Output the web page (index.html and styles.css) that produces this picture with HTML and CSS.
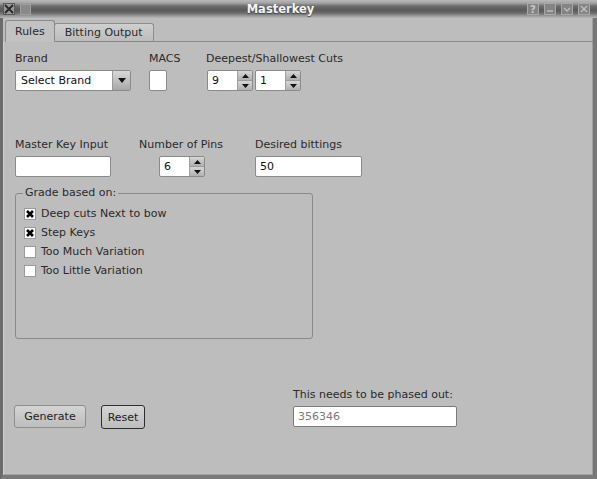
FILE: index.html
```html
<!DOCTYPE html>
<html>
<head>
<meta charset="utf-8">
<link rel="stylesheet" href="styles.css">
</head>
<body>
<div class="window">
  <div class="titlebar">
    <div class="tb-left">
      <svg class="tb-icon" width="12" height="12" viewBox="0 0 12 12"><rect x="0.5" y="0.5" width="11" height="11" fill="#9a9a9a" stroke="#5a5a5a"/><path d="M2 2 L10 10 M10 2 L2 10" stroke="#2a2a2a" stroke-width="2"/></svg>
      <svg class="tb-icon" width="11" height="11" viewBox="0 0 11 11"><rect x="0.5" y="0.5" width="10" height="10" fill="#8a8a8a" stroke="#9e9e9e"/></svg>
    </div>
    <div class="tb-title">Masterkey</div>
    <div class="tb-right">
      <span class="tb-btn">?</span>
      <span class="tb-btn"><svg width="10" height="10" viewBox="0 0 10 10"><path d="M2 7 H8" stroke="#bbb" stroke-width="1.5"/></svg></span>
      <span class="tb-btn"><svg width="10" height="10" viewBox="0 0 10 10"><path d="M2 4 L5 7 L8 4" stroke="#bbb" stroke-width="1.5" fill="none"/></svg></span>
      <span class="tb-btn"><svg width="10" height="10" viewBox="0 0 10 10"><path d="M2 2 L8 8 M8 2 L2 8" stroke="#bbb" stroke-width="1.5"/></svg></span>
    </div>
  </div>
  <div class="client">
    <div class="tabbar">
      <div class="tab active">Rules</div>
      <div class="tab">Bitting Output</div>
      <div class="tab-fill"></div>
    </div>
    <div class="panel">
      <div class="row row1">
        <div class="field f-brand">
          <label>Brand</label>
          <div class="combo">
            <span class="combo-text">Select Brand</span>
            <span class="combo-btn"><svg width="8" height="5" viewBox="0 0 8 5"><path d="M0 0 H8 L4 5 Z" fill="#111"/></svg></span>
          </div>
        </div>
        <div class="field f-macs">
          <label>MACS</label>
          <div class="bigcheck"></div>
        </div>
        <div class="field f-cuts">
          <label>Deepest/Shallowest Cuts</label>
          <div class="spins">
            <div class="spin"><span class="spin-text">9</span><span class="spin-btns"><span class="up"><svg width="7" height="4" viewBox="0 0 7 4"><path d="M0 4 H7 L3.5 0 Z" fill="#111"/></svg></span><span class="down"><svg width="7" height="4" viewBox="0 0 7 4"><path d="M0 0 H7 L3.5 4 Z" fill="#111"/></svg></span></span></div>
            <div class="spin"><span class="spin-text">1</span><span class="spin-btns"><span class="up"><svg width="7" height="4" viewBox="0 0 7 4"><path d="M0 4 H7 L3.5 0 Z" fill="#111"/></svg></span><span class="down"><svg width="7" height="4" viewBox="0 0 7 4"><path d="M0 0 H7 L3.5 4 Z" fill="#111"/></svg></span></span></div>
          </div>
        </div>
      </div>

      <div class="row row2">
        <div class="field f-master">
          <label>Master Key Input</label>
          <div class="textbox w96"></div>
        </div>
        <div class="field f-pins">
          <label>Number of Pins</label>
          <div class="spin pins"><span class="spin-text">6</span><span class="spin-btns"><span class="up"><svg width="7" height="4" viewBox="0 0 7 4"><path d="M0 4 H7 L3.5 0 Z" fill="#111"/></svg></span><span class="down"><svg width="7" height="4" viewBox="0 0 7 4"><path d="M0 0 H7 L3.5 4 Z" fill="#111"/></svg></span></span></div>
        </div>
        <div class="field f-desired">
          <label>Desired bittings</label>
          <div class="textbox w107">50</div>
        </div>
      </div>

      <fieldset class="group">
        <legend>Grade based on:</legend>
        <div class="chk"><span class="box checked"><svg width="10" height="10" viewBox="0 0 10 10"><path d="M2 2 L8 8 M8 2 L2 8" stroke="#000" stroke-width="2.6"/></svg></span>Deep cuts Next to bow</div>
        <div class="chk"><span class="box checked"><svg width="10" height="10" viewBox="0 0 10 10"><path d="M2 2 L8 8 M8 2 L2 8" stroke="#000" stroke-width="2.6"/></svg></span>Step Keys</div>
        <div class="chk"><span class="box"></span>Too Much Variation</div>
        <div class="chk"><span class="box"></span>Too Little Variation</div>
      </fieldset>

      <div class="row bottom">
        <div class="buttons">
          <button class="btn gen">Generate</button>
          <button class="btn reset">Reset</button>
        </div>
        <div class="field f-phase">
          <label>This needs to be phased out:</label>
          <div class="textbox phase">356346</div>
        </div>
      </div>
    </div>
  </div>
</div>
</body>
</html>
```

FILE: styles.css
```css
* { box-sizing: border-box; }
html, body { margin: 0; padding: 0; }
body {
  width: 597px;
  height: 479px;
  overflow: hidden;
  background: #3a3a3a;
  font-family: "DejaVu Sans", "Liberation Sans", sans-serif;
  font-size: 11px;
  color: #2a2a2a;
}
.window {
  width: 597px;
  height: 479px;
  display: flex;
  flex-direction: column;
  background: #bdbdbd;
}
.titlebar {
  height: 18px;
  flex: none;
  display: flex;
  align-items: center;
  background: linear-gradient(to bottom, #b9b9b9 0px, #a4a4a4 3px, #6d6d6d 6px, #5a5a5a 10px, #6a6a6a 13px, #9c9c9c 16px, #b7b7b7 18px);
}
.tb-left {
  display: flex;
  gap: 5px;
  padding-left: 3px;
  align-items: center;
  width: 100px;
}
.tb-icon { display: block; }
.tb-title {
  flex: 1;
  text-align: center;
  color: #f4f4f4;
  font-weight: bold;
  font-size: 11.5px;
  text-shadow: 0 1px 1px #444;
  padding-right: 36px;
}
.tb-right {
  display: flex;
  gap: 5px;
  padding-right: 7px;
  width: 100px;
  justify-content: flex-end;
}
.tb-btn {
  width: 12px;
  height: 12px;
  border: 1px solid #a8a8a8;
  background: #848484;
  color: #c8c8c8;
  font-size: 10px;
  display: flex;
  align-items: center;
  justify-content: center;
  font-weight: bold;
}
.client {
  flex: 1;
  display: flex;
  flex-direction: column;
  border-left: 3px solid #6b6b6b;
  border-right: 4px solid #777;
  border-bottom: 4px solid #7a7a7a;
  box-shadow: inset -1px -1px 0 #a0a0a0;
}
.tabbar {
  display: flex;
  align-items: flex-end;
  height: 24px;
  padding-left: 2px;
}
.tab {
  height: 19px;
  padding: 0 10px;
  line-height: 18px;
  border: 1px solid #8e8e8e;
  border-bottom: 1px solid #888;
  border-radius: 3px 3px 0 0;
  background: linear-gradient(#cfcfcf, #bcbcbc);
  margin-left: -1px;
}
.tab.active {
  height: 22px;
  line-height: 21px;
  padding: 0 9px;
  background: #c2c2c2;
  border-color: #8a8a8a;
  border-bottom-color: #c0c0c0;
  position: relative;
  z-index: 1;
  margin-left: 0;
}
.tab-fill {
  flex: 1;
  border-bottom: 1px solid #8a8a8a;
}
.panel {
  flex: 1;
  padding: 10px 0 0 11px;
  border-left: 1px solid #d0d0d0;
}
.row {
  display: flex;
  align-items: flex-start;
}
.field {
  display: flex;
  flex-direction: column;
}
.field label {
  height: 13px;
  line-height: 13px;
  margin-bottom: 5px;
}
.f-brand { width: 116px; }
.f-macs { margin-left: 18px; width: 57px; }
.combo {
  height: 21px;
  width: 116px;
  display: flex;
  border: 1px solid #8a8a8a;
  border-radius: 2px;
  background: #fff;
}
.combo-text {
  flex: 1;
  padding-left: 5px;
  line-height: 19px;
  color: #111;
}
.combo-btn {
  width: 18px;
  border-left: 1px solid #9a9a9a;
  background: linear-gradient(#d8d8d8, #a8a8a8);
  display: flex;
  align-items: center;
  justify-content: center;
}
.bigcheck {
  width: 18px;
  height: 21px;
  background: #fff;
  border: 1px solid #8a8a8a;
  border-radius: 2px;
}
.spins { display: flex; gap: 2px; margin-left: 1px; }
.spin {
  width: 46px;
  height: 21px;
  display: flex;
  border: 1px solid #8a8a8a;
  border-radius: 2px;
  background: #fff;
}
.spin-text {
  flex: 1;
  padding-left: 4px;
  line-height: 19px;
  color: #111;
}
.spin-btns {
  width: 15px;
  display: flex;
  flex-direction: column;
  border-left: 1px solid #a0a0a0;
}
.spin-btns span {
  flex: 1;
  display: flex;
  align-items: center;
  justify-content: center;
  background: linear-gradient(#d6d6d6, #b0b0b0);
}
.spin-btns .up { border-bottom: 1px solid #9a9a9a; }

.row2 { margin-top: 47px; }
.f-master { width: 96px; }
.f-pins { margin-left: 28px; }
.f-pins .spin { margin-left: 20px; }
.f-desired { margin-left: 32px; }
.textbox {
  height: 21px;
  background: #fff;
  border: 1px solid #8a8a8a;
  border-radius: 2px;
  padding-left: 4px;
  line-height: 19px;
  color: #111;
}
.w96 { width: 96px; }
.w107 { width: 107px; }

.group {
  margin: 10px 0 0 0;
  width: 298px;
  height: 152px;
  border: 1px solid #8a8a8a;
  border-radius: 3px;
  padding: 5px 0 0 8px;
}
.group legend {
  padding: 0 2px;
  margin-left: -1px;
  line-height: 12px;
}
.chk {
  display: flex;
  align-items: center;
  height: 19px;
}
.box {
  width: 12px;
  height: 12px;
  background: #fff;
  border: 1px solid #9a9a9a;
  margin-right: 5px;
  display: flex;
  align-items: center;
  justify-content: center;
}
.bottom {
  margin-top: 49px;
  align-items: flex-end;
}
.buttons { display: flex; gap: 15px; margin-left: -1px; margin-bottom: -2px; }
.btn {
  font-family: inherit;
  font-size: 11px;
  color: #222;
  height: 23px;
  border: 1px solid #8e8e8e;
  border-radius: 3px;
  background: linear-gradient(#d4d4d4, #bdbdbd);
  padding: 0;
}
.btn.gen { width: 72px; }
.btn.reset { width: 44px; height: 24px; border-color: #2e2e2e; }
.f-phase { margin-left: 148px; }
.textbox.phase {
  width: 164px;
  color: #7a7a7a;
  border-color: #7a7a7a;
}
```
